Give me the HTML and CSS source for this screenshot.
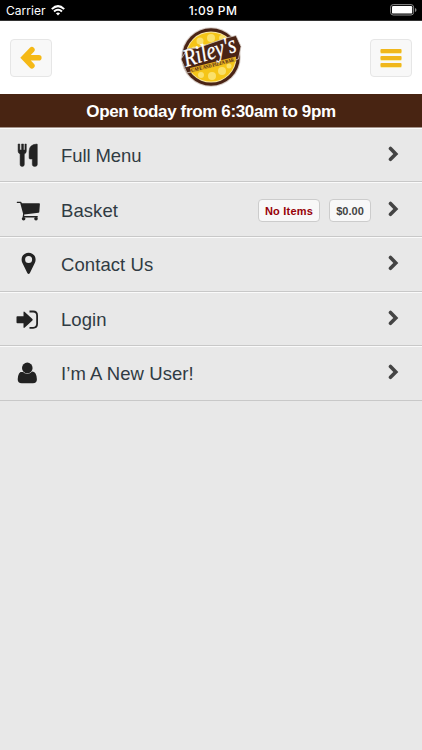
FILE: index.html
```
<!DOCTYPE html>
<html lang="en">
<head>
<meta charset="utf-8">
<title>Riley's</title>
<link rel="stylesheet" href="styles.css">
</head>
<body>
<div class="status">
  <div class="carrier"><span>Carrier</span>
    <svg width="14" height="11" viewBox="0 0 14 11" fill="none" stroke="#fff" stroke-width="2"><path d="M.8 4.1Q7-1.8 13.2 4.1M3 6.6Q7 3 11 6.6"/><path d="M4.9 8.3Q7 6.6 9.1 8.3L7 10.6Z" fill="#fff" stroke="none"/></svg>
  </div>
  <div class="time">1:09 PM</div>
  <svg class="battery" width="27" height="12" viewBox="0 0 27 12"><rect x=".6" y=".6" width="23" height="10.4" rx="2.6" fill="none" stroke="#8b8b8b"/><rect x="2" y="2" width="20.2" height="7.6" rx="1.2" fill="#fff"/><path d="M25 4v4q1.5-.5 1.5-2T25 4Z" fill="#8b8b8b"/></svg>
</div>
<header class="header">
  <a class="button"><svg width="22" height="24" viewBox="0 0 22 24"><path d="M11.9 3.8 4.2 11.8 11.9 19.8M5 11.8H18.8" fill="none" stroke="#f5b916" stroke-width="5.6" stroke-linecap="round"/></svg></a>
  <svg class="logo" width="64" height="62" viewBox="0 0 64 62">
    <circle cx="32" cy="31" r="29.8" fill="#d8cfc9"/>
    <circle cx="32" cy="31" r="28.8" fill="#4a2415"/>
    <circle cx="32" cy="31" r="25.6" fill="#f7e5a3"/>
    <circle cx="32" cy="31" r="24.6" fill="#f5c518"/>
    <g fill="#fae16c"><circle cx="21" cy="15" r="3.5"/><circle cx="32" cy="12" r="4"/><circle cx="43" cy="12" r="3"/><circle cx="25" cy="21" r="3"/><circle cx="15" cy="23" r="2.5"/><circle cx="22" cy="49" r="3"/><circle cx="33" cy="50" r="4"/><circle cx="43" cy="45" r="4"/><circle cx="50" cy="40" r="2.5"/></g>
    <path d="M2 33 9 22.5 18 22 47 12l10-2.5L62 20.5l-2.5 12.5L8 47Z" fill="#4a2415" stroke="#d8cfc9" stroke-width=".8"/>
    <path d="M11 42 57 30.5 57 35.5 12 47Z" fill="#e3ae20"/>
    <text class="logo-name" x="7" y="41" transform="rotate(-17 7 41)" textLength="54" lengthAdjust="spacingAndGlyphs">Riley's</text>
    <text class="logo-sub" x="12.5" y="46" transform="rotate(-14 12.5 46)" textLength="44" lengthAdjust="spacingAndGlyphs">CAFE AND PIZZA BAR</text>
  </svg>
  <a class="button"><svg width="22" height="24" viewBox="0 0 22 24"><g fill="#faeea8"><rect x=".5" y="3" width="21" height="5" rx="1"/><rect x=".5" y="10" width="21" height="5" rx="1"/><rect x=".5" y="17" width="21" height="5" rx="1"/></g><g fill="#f0b71c"><rect x=".5" y="3" width="21" height="4" rx="1"/><rect x=".5" y="10" width="21" height="4" rx="1"/><rect x=".5" y="17" width="21" height="4" rx="1"/></g></svg></a>
</header>
<div class="banner"><span>Open today from 6:30am to 9pm</span></div>
<nav class="menu">
  <a class="row"><svg class="icon" viewBox="0 0 26 26"><path d="M3.1 2v7.2q0 2 2 2.8v10.5q0 2 2.1 2t2.1-2V12q2-.8 2-2.8V2H9.9v6H8.5V2H6.6v6H4.8V2Zm19 0q-8 .4-8 7.2V16q0 1 1 1h2.2v5.5q0 2 2.5 2t2.5-2V2.6q0-.6-.2-.6Z" stroke="#222" stroke-width=".5"/></svg><span class="label label-full">Full Menu</span><svg class="chevron" viewBox="0 0 12 16"><path d="m2.5 2.5 5.3 5.4-5.3 5.4"/></svg></a>
  <a class="row"><svg class="icon" viewBox="0 0 26 26"><path fill-rule="evenodd" d="M2 5.9Q1.2 4.8 2.3 4.7H6L7 6.3h17.2q.7 0 .7.8l-.6 7.9q-.1.7-.8.8L9.2 17.6v1.4h13.5v1.4H7.6l.5-3.6L5.2 5.9Z"/><circle cx="8.6" cy="21.8" r="1.8"/><circle cx="21" cy="21.8" r="1.8"/></svg><span class="label">Basket</span><span class="tag tag-empty">No Items</span><span class="tag tag-total">$0.00</span><svg class="chevron" viewBox="0 0 12 16"><path d="m2.5 2.5 5.3 5.4-5.3 5.4"/></svg></a>
  <a class="row"><svg class="icon" viewBox="0 0 26 26"><path fill-rule="evenodd" d="M13.6 1.7c-4 0-7 3-7 6.8 0 1.2.2 2.2.7 3.2l5 10.4q1.3 1.8 2.6 0l5-10.4c.5-1 .7-2 .7-3.2 0-3.8-3-6.8-7-6.8Zm0 3.4a3.5 3.5 0 1 1 0 7 3.5 3.5 0 0 1 0-7Z"/></svg><span class="label">Contact Us</span><svg class="chevron" viewBox="0 0 12 16"><path d="m2.5 2.5 5.3 5.4-5.3 5.4"/></svg></a>
  <a class="row"><svg class="icon" viewBox="0 0 26 26"><path d="M1.5 11.1q0-.9.9-.9h6.1V6.5q0-1.6 1.3-.6l7.6 7q.7.8 0 1.6l-7.6 7q-1.3 1-1.3-.6v-3.7H2.4q-.9 0-.9-.9Z"/><path d="M14.5 5.5h3.6q4 0 4 4v8.3q0 4-4 4h-3.6" fill="none" stroke="#222" stroke-width="1.8"/></svg><span class="label">Login</span><svg class="chevron" viewBox="0 0 12 16"><path d="m2.5 2.5 5.3 5.4-5.3 5.4"/></svg></a>
  <a class="row"><svg class="icon" viewBox="0 0 26 26"><circle cx="12.3" cy="7.9" r="5.3"/><path d="M7.5 11.4Q3 11.5 2.7 19.3q0 3.9 4 3.9h11.2q4 0 4-3.9-.3-7.8-4.8-7.9-2 2.3-4.8 2.3t-4.8-2.3Z"/></svg><span class="label">I’m A New User!</span><svg class="chevron" viewBox="0 0 12 16"><path d="m2.5 2.5 5.3 5.4-5.3 5.4"/></svg></a>
</nav>
</body>
</html>
```
FILE: styles.css
```
* { box-sizing: border-box; }
body {
  margin: 0;
  height: 750px;
  overflow: hidden;
  background: #e8e8e8;
  font-family: "Liberation Sans", Arial, sans-serif;
}
svg { display: block; flex: none; }
.status {
  height: 21px;
  padding: 0 6px;
  display: grid;
  grid-template-columns: 1fr auto 1fr;
  align-items: center;
  background: #000;
  border-bottom: 1px solid #333;
  color: #fff;
  font-family: Inter, sans-serif;
  font-size: 12px;
}
.carrier { display: flex; gap: 5px; align-items: center; letter-spacing: .05px; padding-top: 1px; }
.time { font-weight: 500; letter-spacing: .4px; padding: 1px 0 0 4px; }
.battery { justify-self: end; margin-right: -1px; }
.header {
  height: 73px;
  padding: 0 10px;
  display: flex;
  align-items: center;
  justify-content: space-between;
  background: #fff;
}
.button {
  width: 42px;
  height: 38px;
  display: flex;
  align-items: center;
  justify-content: center;
  background: #f8f8f8;
  border: 1px solid #e6e6e6;
  border-radius: 4px;
}
.logo { overflow: visible; margin-top: -1px; }
.logo-name { font: italic 400 25px "Liberation Serif", serif; fill: #fff; stroke: #fff; stroke-width: .3px; }
.logo-sub { font: 700 5px "Liberation Serif", serif; fill: #4a2415; }
.banner {
  height: 34px;
  display: flex;
  align-items: center;
  justify-content: center;
  background: #482412;
  border-bottom: 1px solid #a5948b;
  padding-top: 3px;
  color: #fff;
  font-size: 17px;
  letter-spacing: -.36px;
  font-weight: 700;
}
.menu { margin-top: -.4px; }
.row {
  height: 54.65px;
  padding: 0 22px 0 15px;
  display: flex;
  align-items: center;
  border-top: 1px solid #fafafa;
  border-bottom: 1px solid #c8c8c8;
}
.icon { width: 26px; height: 26px; fill: #222; }
.label { flex: 1; margin-left: 20px; padding-top: 2px; color: #303b43; font-size: 18.5px; letter-spacing: .08px; white-space: nowrap; }
.label-full { letter-spacing: -.1px; }
.tag {
  height: 23px;
  display: flex;
  align-items: center;
  justify-content: center;
  background: #f8f8f8;
  border: 1px solid #ccc;
  border-radius: 4px;
  font-size: 11px;
  font-weight: 700;
  margin-top: 2px;
}
.tag-empty { width: 62px; margin-right: 9px; color: #970007; letter-spacing: .2px; }
.tag-total { width: 42px; margin-right: 17px; color: #444; }
.chevron { width: 12px; height: 16px; margin-bottom: 2px; fill: none; stroke: #444; stroke-width: 3.6; stroke-linecap: round; }
```
